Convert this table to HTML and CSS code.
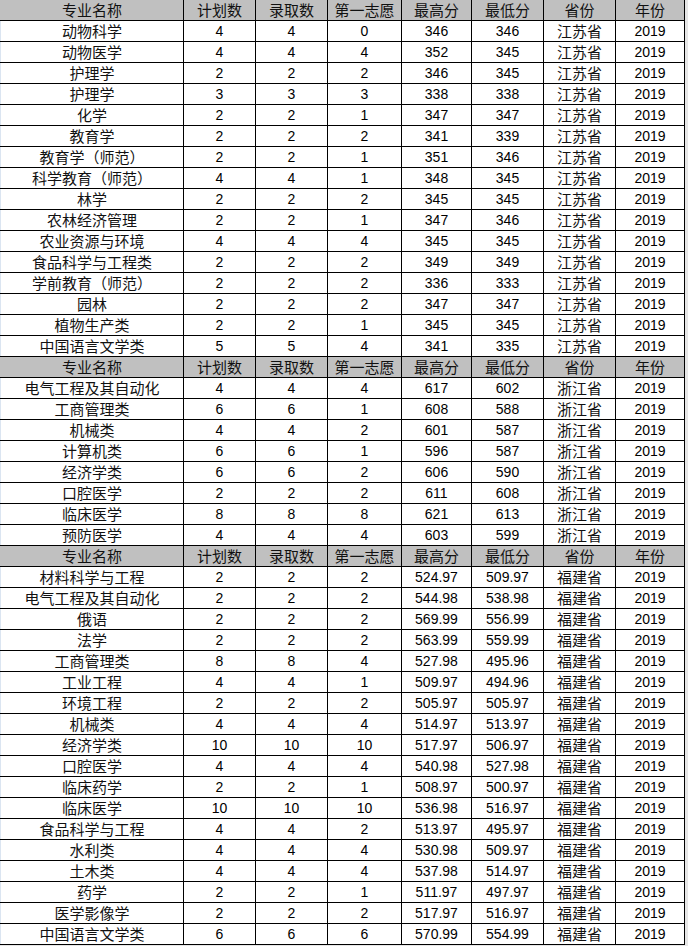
FILE: index.html
```html
<!DOCTYPE html>
<html lang="zh-CN">
<head>
<meta charset="utf-8">
<title>录取分数</title>
<link rel="stylesheet" href="styles.css">
</head>
<body>
<table class="grid">
<colgroup>
<col class="c1"><col class="c2"><col class="c3"><col class="c4"><col class="c5"><col class="c6"><col class="c7"><col class="c8">
</colgroup>
<tbody id="tb"></tbody>
</table>
<script src="app.js"></script>
</body>
</html>
```
FILE: app.js
```js
var H = ["专业名称","计划数","录取数","第一志愿","最高分","最低分","省份","年份"];
var groups = [
 ["江苏省", [
  ["动物科学",4,4,0,"346","346"],
  ["动物医学",4,4,4,"352","345"],
  ["护理学",2,2,2,"346","345"],
  ["护理学",3,3,3,"338","338"],
  ["化学",2,2,1,"347","347"],
  ["教育学",2,2,2,"341","339"],
  ["教育学（师范）",2,2,1,"351","346"],
  ["科学教育（师范）",4,4,1,"348","345"],
  ["林学",2,2,2,"345","345"],
  ["农林经济管理",2,2,1,"347","346"],
  ["农业资源与环境",4,4,4,"345","345"],
  ["食品科学与工程类",2,2,2,"349","349"],
  ["学前教育（师范）",2,2,2,"336","333"],
  ["园林",2,2,2,"347","347"],
  ["植物生产类",2,2,1,"345","345"],
  ["中国语言文学类",5,5,4,"341","335"]
 ]],
 ["浙江省", [
  ["电气工程及其自动化",4,4,4,"617","602"],
  ["工商管理类",6,6,1,"608","588"],
  ["机械类",4,4,2,"601","587"],
  ["计算机类",6,6,1,"596","587"],
  ["经济学类",6,6,2,"606","590"],
  ["口腔医学",2,2,2,"611","608"],
  ["临床医学",8,8,8,"621","613"],
  ["预防医学",4,4,4,"603","599"]
 ]],
 ["福建省", [
  ["材料科学与工程",2,2,2,"524.97","509.97"],
  ["电气工程及其自动化",2,2,2,"544.98","538.98"],
  ["俄语",2,2,2,"569.99","556.99"],
  ["法学",2,2,2,"563.99","559.99"],
  ["工商管理类",8,8,4,"527.98","495.96"],
  ["工业工程",4,4,1,"509.97","494.96"],
  ["环境工程",2,2,2,"505.97","505.97"],
  ["机械类",4,4,4,"514.97","513.97"],
  ["经济学类",10,10,10,"517.97","506.97"],
  ["口腔医学",4,4,4,"540.98","527.98"],
  ["临床药学",2,2,1,"508.97","500.97"],
  ["临床医学",10,10,10,"536.98","516.97"],
  ["食品科学与工程",4,4,2,"513.97","495.97"],
  ["水利类",4,4,4,"530.98","509.97"],
  ["土木类",4,4,4,"537.98","514.97"],
  ["药学",2,2,1,"511.97","497.97"],
  ["医学影像学",2,2,2,"517.97","516.97"],
  ["中国语言文学类",6,6,6,"570.99","554.99"]
 ]]
];
var tb = document.getElementById("tb");
var html = "";
groups.forEach(function(g){
  html += '<tr class="head">' + H.map(function(t){return '<td class="zh">'+t+'</td>';}).join("") + '</tr>';
  g[1].forEach(function(r){
    html += '<tr>' +
      '<td class="zh">'+r[0]+'</td>' +
      '<td class="n">'+r[1]+'</td>' +
      '<td class="n">'+r[2]+'</td>' +
      '<td class="n">'+r[3]+'</td>' +
      '<td class="n">'+r[4]+'</td>' +
      '<td class="n">'+r[5]+'</td>' +
      '<td class="zh">'+g[0]+'</td>' +
      '<td class="n">2019</td>' +
      '</tr>';
  });
});
tb.innerHTML = html;
```
FILE: styles.css
```css
html, body {
  margin: 0;
  padding: 0;
  background: #e6e6e6;
}
.grid {
  border-collapse: collapse;
  table-layout: fixed;
  width: 684px;
  background: #fff;
  font-family: "Liberation Sans", "Noto Sans CJK SC", sans-serif;
  color: #000;
}
.c1 { width: 183px; }
.c2 { width: 72px; }
.c3 { width: 72px; }
.c4 { width: 74px; }
.c5 { width: 70px; }
.c6 { width: 72px; }
.c7 { width: 72px; }
.c8 { width: 69px; }
.grid td {
  height: 20px;
  padding: 0;
  border: 1px solid #000;
  text-align: center;
  vertical-align: middle;
  line-height: 20px;
  white-space: nowrap;
  overflow: hidden;
}
.grid tr:first-child td { border-top: none; }
.grid td:first-child { border-left: 1px solid #dbe5f1; }
.grid tr.head td { background: #c0c0c0; }
.grid tr.head td:first-child { border-left-color: #c0c0c0; }
.zh {
  font-size: 15px;
  font-family: "Noto Sans CJK SC", "Liberation Sans", sans-serif;
  font-weight: 400;
  color: #111;
}
.n {
  font-size: 14px;
  font-family: "Liberation Sans", sans-serif;
}
```
